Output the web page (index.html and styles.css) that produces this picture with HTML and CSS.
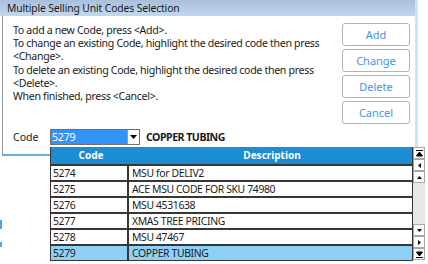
FILE: index.html
```html
<!DOCTYPE html>
<html>
<head>
	<meta charset="utf-8">
	<title>Multiple Selling Unit Codes Selection</title>
	<link rel="stylesheet" href="styles.css">
</head>
<body>
	<div class="window">
		<div class="titlebar">Multiple Selling Unit Codes Selection</div>
		<div class="client">
			<div class="top">
				<div class="help">
					<p>To add a new Code, press &lt;Add&gt;.</p>
					<p>To change an existing Code, highlight the desired code then press<br>&lt;Change&gt;.</p>
					<p>To delete an existing Code, highlight the desired code then press<br>&lt;Delete&gt;.</p>
					<p>When finished, press &lt;Cancel&gt;.</p>
				</div>
				<div class="buttons">
					<button class="btn">Add</button>
					<button class="btn">Change</button>
					<button class="btn">Delete</button>
					<button class="btn">Cancel</button>
				</div>
			</div>
			<div class="coderow">
				<span class="label">Code</span>
				<div class="combo">
					<span class="value">5279</span>
					<span class="arrow"><svg width="7" height="4" viewBox="0 0 7 4"><path d="M0 0h7L3.5 4z" fill="#000"/></svg></span>
				</div>
				<span class="selected">COPPER TUBING</span>
			</div>
		</div>
	</div>

	<!-- dropdown list of the combo -->
	<div class="dropdown">
		<div class="grid">
			<div class="row head"><div class="c1">Code</div><div class="c2">Description</div></div>
			<div class="row"><div class="c1">5274</div><div class="c2">MSU for DELIV2</div></div>
			<div class="row"><div class="c1">5275</div><div class="c2">ACE MSU CODE FOR SKU 74980</div></div>
			<div class="row"><div class="c1">5276</div><div class="c2">MSU 4531638</div></div>
			<div class="row"><div class="c1">5277</div><div class="c2">XMAS TREE PRICING</div></div>
			<div class="row"><div class="c1">5278</div><div class="c2">MSU 47467</div></div>
			<div class="row active"><div class="c1">5279</div><div class="c2">COPPER TUBING</div></div>
		</div>
		<div class="scroll">
			<span class="sb"><svg width="7" height="7" viewBox="0 0 7 7"><path d="M0 0.5h7M0.5 6L3.5 2 6.5 6z" stroke="#000" fill="#000"/></svg></span>
			<span class="sb"><svg width="7" height="7" viewBox="0 0 7 7"><path d="M5 1v5L2 3.5z" fill="#000"/></svg></span>
			<span class="sb"><svg width="7" height="7" viewBox="0 0 7 7"><path d="M1 5h5L3.5 2z" fill="#000"/></svg></span>
			<span class="track"></span>
			<span class="sb"><svg width="7" height="7" viewBox="0 0 7 7"><path d="M1 2h5L3.5 5z" fill="#000"/></svg></span>
			<span class="sb"><svg width="7" height="7" viewBox="0 0 7 7"><path d="M2 1v5L5 3.5z" fill="#000"/></svg></span>
			<span class="sb"><svg width="7" height="7" viewBox="0 0 7 7"><path d="M0 6.5h7M0.5 1L3.5 5 6.5 1z" stroke="#000" fill="#000"/></svg></span>
		</div>
	</div>

	<div class="mark m1"></div>
	<div class="mark m2"></div>
</body>
</html>
```

FILE: styles.css
```css
*{margin: 0;padding: 0;box-sizing: border-box;}
body{font-family: "Noto Sans", "Open Sans", sans-serif;font-size: 10.6px;color: #1a1a1a;background: #fff;width: 428px;height: 264px;overflow: hidden;}

.window{width: 418px;border-right: 3px solid #cfe4f6;}
.titlebar{height: 16px;line-height: 16px;padding-left: 7px;font-size: 10.3px;letter-spacing: -0.1px;color: #1a1a1a;background: linear-gradient(#a9c0dc, #c3d6ec);}
.client{margin-left: 2px;height: 140px;border-left: 1px solid #9a9a9a;border-bottom: 2px solid #5db2e0;display: flex;flex-direction: column;}

.top{display: flex;justify-content: space-between;}
.help{padding: 8px 0 0 10px;line-height: 13.2px;white-space: nowrap;letter-spacing: -0.32px;}
.buttons{display: flex;flex-direction: column;gap: 3px;padding: 7px 5px 0 0;}
.btn{width: 68px;height: 23px;border: 1px solid #b4b4b4;border-radius: 3px;background: #fff;color: #3f95e6;font-family: inherit;font-size: 11px;}

.coderow{display: flex;align-items: center;margin-top: 5px;padding-left: 10px;height: 16px;}
.label{width: 37px;}
.combo{display: flex;width: 90px;height: 16px;border: 1px solid #6e6e6e;}
.combo .value{flex: 1;background: #3294fb;color: #fff;line-height: 14px;padding-left: 1px;letter-spacing: -0.2px;}
.combo .arrow{width: 12px;display: flex;align-items: center;justify-content: center;border-left: 1px solid #9a9a9a;background: #fbfbfb;}
.selected{margin-left: 6px;font-weight: bold;letter-spacing: -0.5px;}

.dropdown{position: absolute;left: 50px;top: 147px;display: flex;}
.grid{width: 363px;border: 1px solid #333;border-top: 0;}
.row{display: flex;height: 16px;border-top: 2px solid #363636;line-height: 14px;font-size: 10.4px;letter-spacing: -0.35px;}
.row .c1{width: 78px;padding-left: 2px;border-right: 2px solid #363636;}
.row .c2{flex: 1;padding-left: 3px;}
.row.head{border-top: 0;height: 17px;line-height: 17px;background: #1c8cd5;color: #fff;font-weight: bold;text-align: center;font-size: 10px;letter-spacing: 0;}
.row.head .c1{border-right: 0;}
.row.active{background: #8fd0f6;}

.scroll{width: 12px;height: 113px;display: flex;flex-direction: column;background: #e8e8e8;}
.sb{height: 12px;display: flex;align-items: center;justify-content: center;border: 1px solid #a8a8a8;background: #fdfdfd;}
.track{flex: 1;}

.mark{position: absolute;left: 0;width: 2px;background: #4aa6e8;}
.m1{top: 220px;height: 9px;}
.m2{top: 242px;height: 5px;}
```
